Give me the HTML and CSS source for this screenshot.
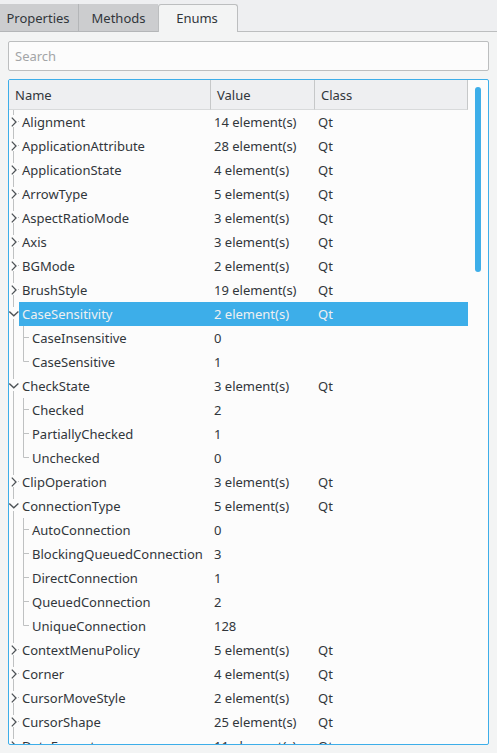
FILE: index.html
```html
<!DOCTYPE html>
<html lang="en">
<head>
<meta charset="utf-8">
<title>Enums</title>
<link rel="stylesheet" href="styles.css">
</head>
<body>
<svg class="defs" aria-hidden="true">
  <symbol id="closed" viewBox="0 0 10 24">
    <path class="line" d="M4.5 0V5M4.5 17V24M9 11.5H10"/>
    <path class="arrow" d="M2.8 7.6L7 12L2.8 16.4"/>
  </symbol>
  <symbol id="open" viewBox="0 0 10 24">
    <path class="line" d="M4.5 0V5M4.5 17V24"/>
    <path class="arrow" d="M.3 9.6L4.8 13.8L9.4 9.6"/>
  </symbol>
  <symbol id="trunk" viewBox="0 0 10 24"><path class="line" d="M4.5 0V24"/></symbol>
  <symbol id="tee" viewBox="0 0 10 24"><path class="line" d="M4.5 0V24M5 11.5H10"/></symbol>
  <symbol id="end" viewBox="0 0 10 24"><path class="line" d="M4.5 0V11.5H10"/></symbol>
</svg>
<nav class="tabs" role="tablist">
  <button class="tab" role="tab">Properties</button>
  <button class="tab" role="tab">Methods</button>
  <button class="tab active" role="tab" aria-selected="true">Enums</button>
</nav>
<main class="page">
  <input class="search" type="text" placeholder="Search" aria-label="Search">
  <div class="frame">
    <div class="view">
      <table class="tree">
        <colgroup><col class="col-name"><col class="col-value"><col></colgroup>
        <thead><tr><th>Name</th><th>Value</th><th>Class</th></tr></thead>
        <tbody id="rows"></tbody>
      </table>
    </div>
    <div class="scroll"><div class="thumb"></div></div>
  </div>
</main>
<script src="script.js"></script>
</body>
</html>
```
FILE: styles.css
```css
* { box-sizing: border-box; }

body {
  margin: 0;
  height: 100vh;
  display: flex;
  flex-direction: column;
  background: #f3f4f4;
  color: #31363b;
  font: 13px/24px "Noto Sans", sans-serif;
}

button, input { font: inherit; color: inherit; }

.defs { display: none; }

.tabs {
  display: flex;
  height: 32px;
  padding-top: 4px;
  background: #eeeff1;
  box-shadow: inset 0 -1px #bcbebf;
}

.tab {
  width: 80px;
  padding: 0;
  border: 0 solid #b4b6b8;
  border-width: 0 1px 1px 0;
  background: #cccdcf;
}

.tab:first-child { width: 79px; padding-right: 2px; }
.tab:nth-child(2) { width: 79px; border-right: 0; }

.tab.active {
  padding: 0 2px 2px 0;
  border: 1px solid #bcbebf;
  border-bottom: 0;
  border-radius: 3px 3px 0 0;
  background: #f3f4f4;
}

.page {
  flex: 1;
  min-height: 0;
  display: flex;
  flex-direction: column;
  gap: 8px;
  padding: 9px 8px 8px;
}

.search {
  height: 30px;
  flex: none;
  padding: 0 6px;
  border: 1px solid #bcbebf;
  border-radius: 2px;
  background: #fcfcfc;
  outline: 0;
}

.search::placeholder { color: #a3a5a7; opacity: 1; }

.frame {
  flex: 1;
  min-height: 0;
  display: flex;
  border: 1px solid #3daee9;
  border-radius: 2px;
  background: #fcfcfc;
  overflow: hidden;
}

.view { flex: 1; overflow: hidden; }

.tree {
  width: 100%;
  table-layout: fixed;
  border-collapse: separate;
  border-spacing: 0;
}

.col-name { width: 202px; }
.col-value { width: 104px; }

th {
  height: 30px;
  padding: 0 6px;
  border: 0 solid #c6c8c9;
  border-width: 0 1px 1px 0;
  border-bottom-color: #d8dadb;
  background: #eeeff1;
  font-weight: normal;
  text-align: left;
}

td {
  height: 24px;
  padding: 0 3px;
  white-space: nowrap;
}

td:first-child { padding: 0; }

.name { display: flex; }

.branch {
  flex: none;
  width: 10px;
  height: 24px;
  padding: 0;
  border: 0;
  background: none;
}

.branch svg, svg.branch { display: block; width: 10px; height: 24px; }

.label { flex: 1; padding-left: 3px; }

.line { fill: none; stroke: #bfc1c2; }
.arrow { fill: none; stroke: #4d5256; stroke-width: 1.3; }

.selected td:not(:first-child), .selected .label {
  background: #3daee9;
  color: #eff0f1;
}

.scroll { width: 20px; padding: 7px 7px 0; }

.thumb {
  width: 6px;
  height: 185px;
  border-radius: 3px;
  background: #3daee9;
}
```
FILE: script.js
```js
// [name, element count, members (when expanded), selected]
const enums = [
  ["Alignment", 14],
  ["ApplicationAttribute", 28],
  ["ApplicationState", 4],
  ["ArrowType", 5],
  ["AspectRatioMode", 3],
  ["Axis", 3],
  ["BGMode", 2],
  ["BrushStyle", 19],
  ["CaseSensitivity", 2, [["CaseInsensitive", 0], ["CaseSensitive", 1]], true],
  ["CheckState", 3, [["Checked", 2], ["PartiallyChecked", 1], ["Unchecked", 0]]],
  ["ClipOperation", 3],
  ["ConnectionType", 5, [["AutoConnection", 0], ["BlockingQueuedConnection", 3],
    ["DirectConnection", 1], ["QueuedConnection", 2], ["UniqueConnection", 128]]],
  ["ContextMenuPolicy", 5],
  ["Corner", 4],
  ["CursorMoveStyle", 2],
  ["CursorShape", 25],
  ["DateFormat", 11]
];

const icon = (id, cls = "") => `<svg class="${cls}" aria-hidden="true"><use href="#${id}"/></svg>`;

const row = (branches, name, value, owner, cls = "") =>
  `<tr class="${cls}"><td><div class="name">${branches}<span class="label">${name}</span></div></td>` +
  `<td>${value}</td><td>${owner}</td></tr>`;

document.getElementById("rows").innerHTML = enums.map(([name, count, members, selected]) => {
  const toggle = `<button class="branch" aria-label="Toggle ${name}" aria-expanded="${!!members}">` +
    `${icon(members ? "open" : "closed")}</button>`;
  const children = (members || []).map(([member, value], i) =>
    row(icon("trunk", "branch") + icon(i === members.length - 1 ? "end" : "tee", "branch"), member, value, ""));
  return row(toggle, name, `${count} element(s)`, "Qt", selected ? "selected" : "") + children.join("");
}).join("");
```
